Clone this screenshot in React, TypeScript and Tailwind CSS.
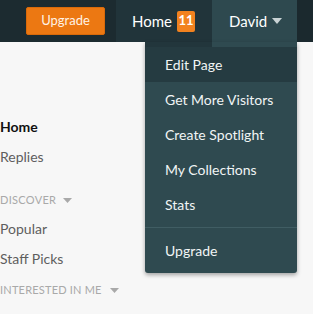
export default function App() {
  const items = ['Edit Page', 'Get More Visitors', 'Create Spotlight', 'My Collections', 'Stats'];

  return (
    <div className="relative w-[313px] h-[314px] overflow-hidden bg-[#f7f7f7] font-['Lato',sans-serif]">
      {/* Top bar */}
      <header className="flex h-[42px] bg-[#1c2b30]">
        <div className="flex items-center pl-[26px] w-[116px]">
          <button className="h-[28px] w-[79px] rounded-[2px] bg-[#ec7812] border border-[#d96a0a] text-[13px] text-[#fff3e6]">
            Upgrade
          </button>
        </div>
        <div className="flex items-center w-[96px] pl-4 bg-[#21343a]">
          <span className="text-[15px] text-white">Home</span>
          <span className="ml-[5px] flex h-[21px] w-[18px] items-center justify-center rounded-[2px] bg-[#f2821f] text-[13px] font-bold text-white">
            11
          </span>
        </div>
        <div className="flex items-center w-[85px] pl-[17px] bg-[#2e494f]">
          <span className="text-[15px] text-white">David</span>
          <svg className="ml-[5px]" width="10" height="6" viewBox="0 0 10 6">
            <path d="M0 0h10L5 6z" fill="#c9d3d5" />
          </svg>
        </div>
        <div className="flex-1 bg-[#1b292e]" />
      </header>

      {/* Sidebar */}
      <nav className="pt-[76px] text-[14px]">
        <div className="h-[30px] leading-[18px] font-bold text-[#111]">Home</div>
        <div className="h-[43px] leading-[18px] text-[#5e5e5e]">Replies</div>
        <div className="flex items-center h-[29px] text-[11px] tracking-[0.3px] text-[#a9a9a9]">
          <span className="-mt-[10px]">DISCOVER</span>
          <svg className="ml-[7px] -mt-[10px]" width="9" height="5" viewBox="0 0 9 5">
            <path d="M0 0h9L4.5 5z" fill="#a9a9a9" />
          </svg>
        </div>
        <div className="h-[30px] leading-[18px] text-[#5e5e5e]">Popular</div>
        <div className="h-[42px] leading-[18px] text-[#5e5e5e]">Staff Picks</div>
        <div className="flex items-center text-[11px] tracking-[0.2px] text-[#a9a9a9] -mt-[10px]">
          <span>INTERESTED IN ME</span>
          <svg className="ml-[8px]" width="9" height="5" viewBox="0 0 9 5">
            <path d="M0 0h9L4.5 5z" fill="#a9a9a9" />
          </svg>
        </div>
      </nav>

      {/* Dropdown menu */}
      <div className="absolute left-[145px] top-[42px] w-[152px] rounded-b-[3px] bg-[#2f4a50] shadow-[0_2px_4px_rgba(0,0,0,0.35)] text-[14px] text-[#f1f5f5]">
        <div className="h-[5px] flex">
          <div className="w-[67px] bg-[#22363c]" />
          <div className="flex-1" />
        </div>
        {items.map((label, i) => (
          <div
            key={label}
            className={
              i === 0
                ? 'flex h-[35px] items-center px-5 bg-[#253b41]'
                : 'flex h-[35px] items-center px-5'
            }
          >
            {label}
          </div>
        ))}
        <div className="mt-[5px] border-t border-[#405d63]" />
        <div className="flex h-[35px] items-center px-5 mt-[5px] mb-[5px]">Upgrade</div>
      </div>
    </div>
  );
}
